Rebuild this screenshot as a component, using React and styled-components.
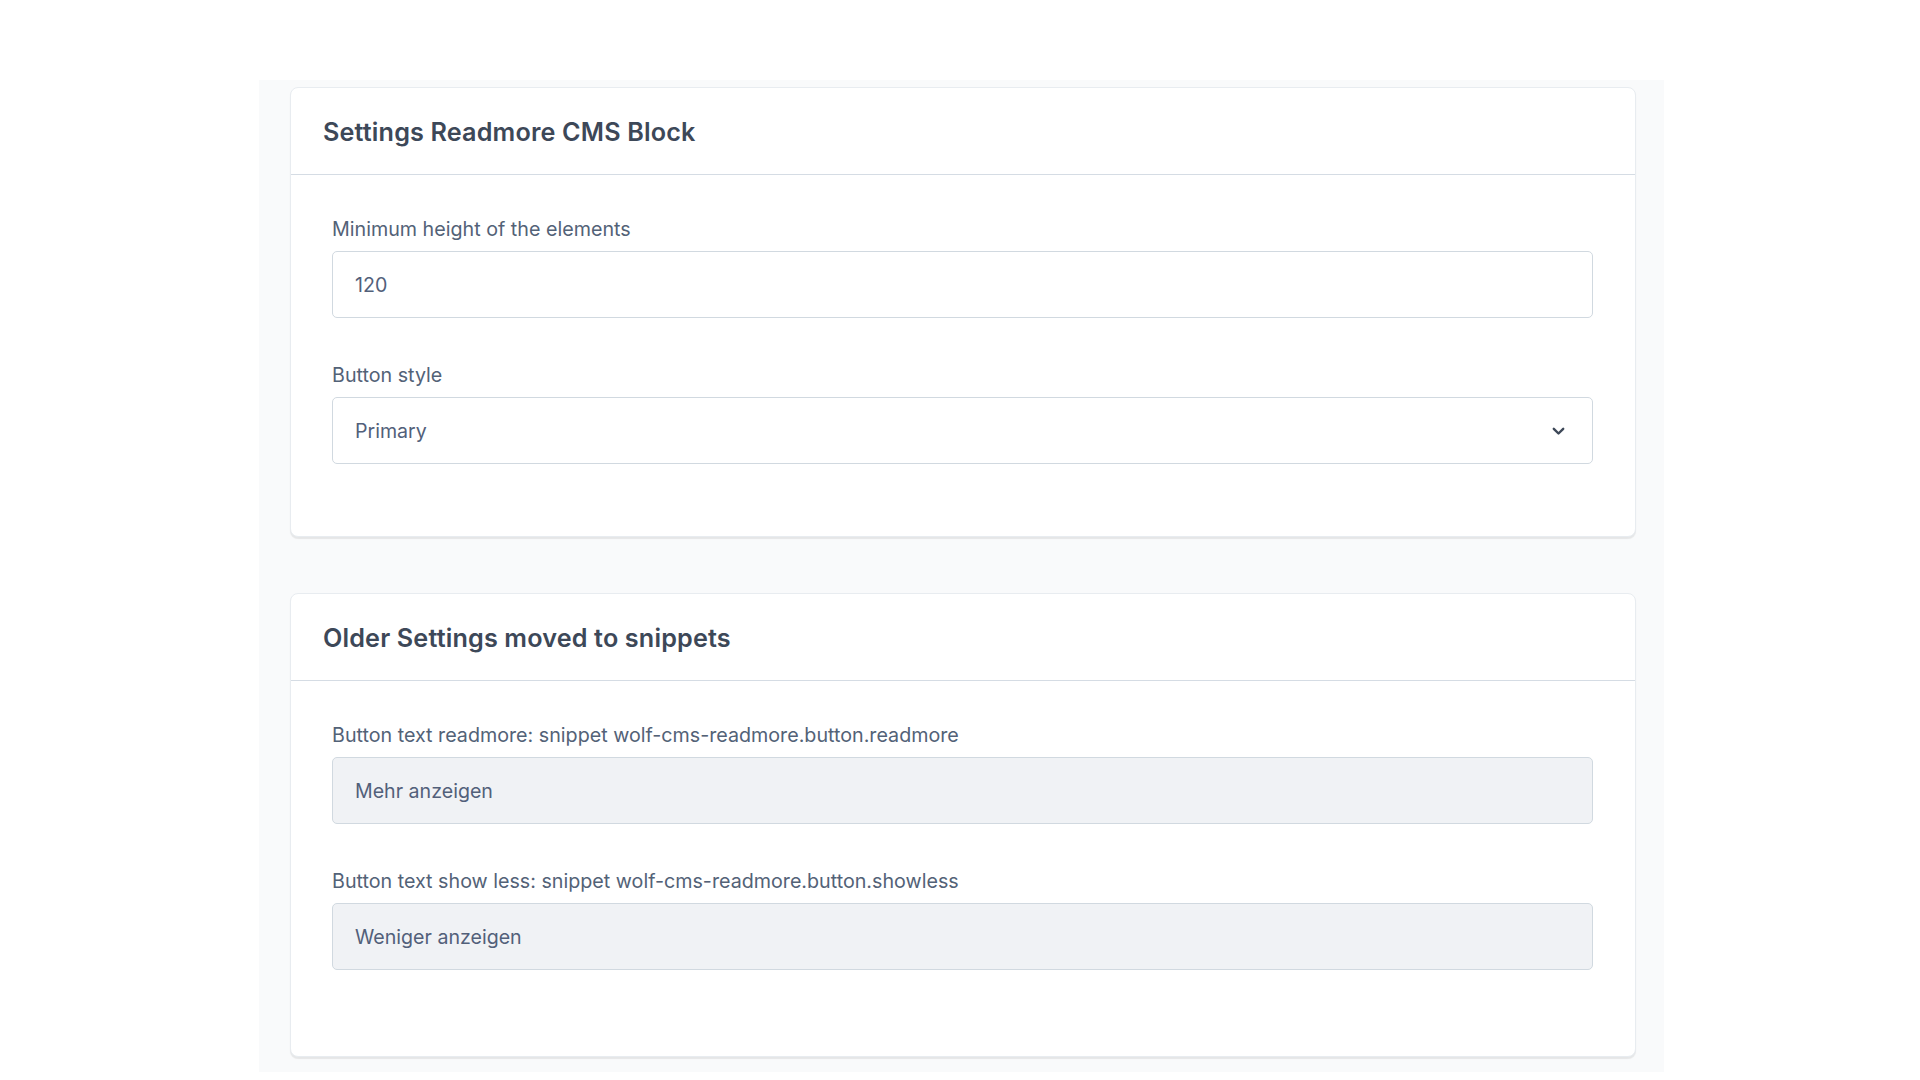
import React from "react";
import styled, { createGlobalStyle } from "styled-components";

const GlobalStyle = createGlobalStyle`
  body {
    margin: 0;
    background: #ffffff;
    font-family: "Inter", "Noto Sans", sans-serif;
  }
`;

const Page = styled.div`
  padding: 80px 0 8px 259px;
`;

const Content = styled.div`
  width: 1405px;
  box-sizing: border-box;
  background: #f9fafb;
  padding: 7px 28px 15px 31px;
  display: flex;
  flex-direction: column;
  gap: 56px;
`;

const Card = styled.div`
  background: #fff;
  border: 1px solid #e8ecf0;
  border-radius: 8px;
  box-shadow: 0 2px 1px rgba(0, 0, 0, 0.08);
`;

const CardHeader = styled.div`
  height: 87px;
  display: flex;
  align-items: center;
  padding: 2px 32px 0;
  box-sizing: border-box;
  border-bottom: 1px solid #d5dce4;
`;

const Title = styled.h2`
  margin: 0;
  font-size: 25.2px;
  font-weight: 600;
  color: #3d4858;
  letter-spacing: 0.15px;
`;

const CardBody = styled.div`
  padding: 42px 42px ${(p) => p.$bottom}px 41px;
  display: flex;
  flex-direction: column;
  gap: 45px;
`;

const Field = styled.div`
  display: flex;
  flex-direction: column;
  gap: 10px;
`;

const Label = styled.label`
  font-size: 19.7px;
  line-height: 24px;
  color: #536277;
`;

const Input = styled.div`
  height: 67px;
  box-sizing: border-box;
  border: 1px solid #d1d9e0;
  border-radius: 5px;
  background: ${(p) => (p.$disabled ? "#f0f2f5" : "#fff")};
  display: flex;
  align-items: center;
  justify-content: space-between;
  padding: 1px 27px 0 22px;
  font-size: 19.6px;
  color: #52607a;
`;

const Chevron = () => (
  <svg width="13" height="9" viewBox="0 0 13 9">
    <polyline
      points="1.8,1.8 6.5,6.5 11.2,1.8"
      fill="none"
      stroke="#3d4858"
      strokeWidth="2.4"
      strokeLinecap="round"
      strokeLinejoin="round"
    />
  </svg>
);

export default function App() {
  return (
    <Page>
      <GlobalStyle />
      <Content>
        <Card>
          <CardHeader>
            <Title>Settings Readmore CMS Block</Title>
          </CardHeader>
          <CardBody $bottom={72}>
            <Field>
              <Label>Minimum height of the elements</Label>
              <Input>120</Input>
            </Field>
            <Field>
              <Label>Button style</Label>
              <Input>
                Primary
                <Chevron />
              </Input>
            </Field>
          </CardBody>
        </Card>
        <Card>
          <CardHeader>
            <Title>Older Settings moved to snippets</Title>
          </CardHeader>
          <CardBody $bottom={86}>
            <Field>
              <Label>Button text readmore: snippet wolf-cms-readmore.button.readmore</Label>
              <Input $disabled>Mehr anzeigen</Input>
            </Field>
            <Field>
              <Label>Button text show less: snippet wolf-cms-readmore.button.showless</Label>
              <Input $disabled>Weniger anzeigen</Input>
            </Field>
          </CardBody>
        </Card>
      </Content>
    </Page>
  );
}
